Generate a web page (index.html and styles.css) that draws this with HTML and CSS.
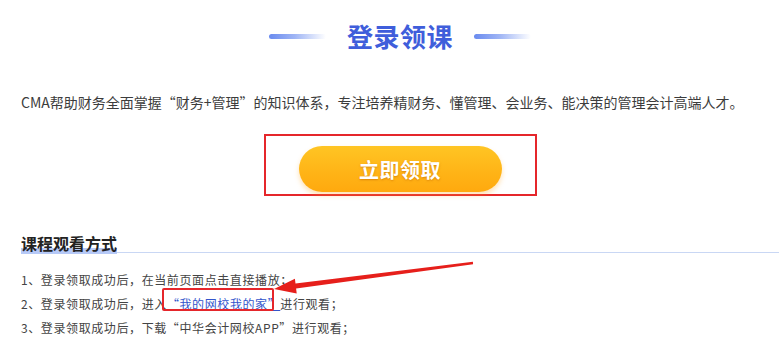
FILE: index.html
```html
<!DOCTYPE html>
<html lang="zh-CN">
<head>
<meta charset="utf-8">
<title>登录领课</title>
<link rel="stylesheet" href="styles.css">
</head>
<body>
<div class="page">
  <div class="title-row">
    <span class="deco"></span>
    <h1 class="title">登录领课</h1>
    <span class="deco"></span>
  </div>
  <p class="intro">CMA帮助财务全面掌握“财务+管理”的知识体系，专注培养精财务、懂管理、会业务、能决策的管理会计高端人才。</p>
  <div class="btn-frame">
    <a class="btn" href="#">立即领取</a>
  </div>
  <div class="section-head"><span class="section-title">课程观看方式</span></div>
  <ol class="steps">
    <li>1、登录领取成功后，在当前页面点击直接播放；</li>
    <li>2、登录领取成功后，进入<span class="link-wrap"><a class="link" href="#">“我的网校我的家”</a><span class="mark-box"></span></span>进行观看；</li>
    <li>3、登录领取成功后，下载“中华会计网校APP”进行观看；</li>
  </ol>
  <svg class="arrow" width="800" height="351" viewBox="0 0 800 351" aria-hidden="true">
    <polygon points="274,289 296.7,293.6 296.1,288.6 473.1,264.2 472.9,261.8 295.5,283.6 294.9,278.7" fill="#e61f1b"/>
  </svg>
</div>
</body>
</html>
```
FILE: styles.css
```css
html, body {
  margin: 0;
  padding: 0;
  background: #ffffff;
  overflow: hidden;
}

.page {
  position: relative;
  width: 800px;
  height: 351px;
  box-sizing: border-box;
  padding: 18px 21px 0;
  font-family: "Noto Sans CJK SC", "Noto Sans", sans-serif;
  color: #3c3c3c;
}

.title-row {
  display: flex;
  justify-content: center;
  align-items: center;
  gap: 21px;
  height: 36px;
}

.deco {
  width: 57px;
  height: 5px;
  border-radius: 3px;
  background: linear-gradient(to right, #6a8bef 0%, #9fb5f5 45%, rgba(255, 255, 255, 0) 100%);
}

.title {
  margin: 0;
  font-size: 26px;
  line-height: 36px;
  font-weight: 700;
  color: #3f5edb;
  letter-spacing: 0.5px;
}

.intro {
  margin: 38px 0 0;
  font-size: 14px;
  line-height: 20px;
  color: #3c3c3c;
  white-space: nowrap;
}

.btn-frame {
  width: 273px;
  height: 62px;
  box-sizing: border-box;
  margin: 22px auto 0;
  border: 2px solid #e5262b;
  padding: 10px 0 0;
  display: flex;
  justify-content: center;
  align-items: flex-start;
}

.btn {
  display: flex;
  justify-content: center;
  align-items: center;
  width: 203px;
  height: 46px;
  border-radius: 23px;
  background: linear-gradient(to bottom, #ffc524 0%, #ffb316 60%, #ffa90e 100%);
  box-shadow: 0 3px 5px rgba(255, 170, 40, 0.35);
  color: #ffffff;
  font-size: 20px;
  font-weight: 700;
  letter-spacing: 0.5px;
  text-decoration: none;
  text-shadow: 0 1px 2px rgba(190, 100, 0, 0.55);
}

.section-head {
  margin-top: 35px;
  border-bottom: 1px solid #c9d7f4;
  height: 21px;
}

.section-title {
  display: inline-block;
  height: 21px;
  line-height: 20px;
  font-size: 16px;
  font-weight: 700;
  color: #222222;
  background: linear-gradient(to bottom, rgba(255, 255, 255, 0) 15px, #b6c9f7 15px);
}

.steps {
  list-style: none;
  margin: 15px 0 0;
  padding: 0;
  font-size: 12px;
  line-height: 24px;
  color: #444444;
  letter-spacing: 0.6px;
}

.link-wrap {
  position: relative;
  display: inline-block;
}

.link {
  color: #3355cc;
  text-decoration: underline;
  text-underline-offset: 1px;
}

.mark-box {
  position: absolute;
  left: -5px;
  right: 6px;
  top: -4px;
  bottom: 5px;
  border: 2px solid #e5262b;
  border-radius: 2px;
}

.arrow {
  position: absolute;
  left: 0;
  top: 0;
  pointer-events: none;
}
```
